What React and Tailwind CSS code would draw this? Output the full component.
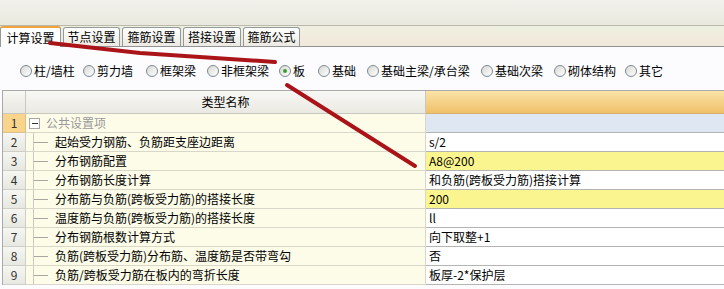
import React from 'react';

const tabs = [
  { label: '计算设置', w: 'w-[61px]', active: true },
  { label: '节点设置', w: 'w-[57px]' },
  { label: '箍筋设置', w: 'w-[59px]' },
  { label: '搭接设置', w: 'w-[58px]' },
  { label: '箍筋公式', w: 'w-[57px]' },
];

const radios = [
  { label: '柱/墙柱', w: 'w-[63px]' },
  { label: '剪力墙', w: 'w-[63px]' },
  { label: '框架梁', w: 'w-[61px]' },
  { label: '非框架梁', w: 'w-[72px]' },
  { label: '板', w: 'w-[39px]', checked: true },
  { label: '基础', w: 'w-[49px]' },
  { label: '基础主梁/承台梁', w: 'w-[114px]' },
  { label: '基础次梁', w: 'w-[73px]' },
  { label: '砌体结构', w: 'w-[71px]' },
  { label: '其它', w: 'w-[50px]' },
];

const rows = [
  { name: '起始受力钢筋、负筋距支座边距离', value: 's/2' },
  { name: '分布钢筋配置', value: 'A8@200', yellow: true },
  { name: '分布钢筋长度计算', value: '和负筋(跨板受力筋)搭接计算' },
  { name: '分布筋与负筋(跨板受力筋)的搭接长度', value: '200', yellow: true },
  { name: '温度筋与负筋(跨板受力筋)的搭接长度', value: 'll' },
  { name: '分布钢筋根数计算方式', value: '向下取整+1' },
  { name: '负筋(跨板受力筋)分布筋、温度筋是否带弯勾', value: '否' },
  { name: '负筋/跨板受力筋在板内的弯折长度', value: '板厚-2*保护层' },
];

const font = { fontFamily: '"SimSun", "Noto Sans CJK SC", "Liberation Sans", sans-serif' };

function Radio({ label, w, checked }) {
  return (
    <div className={`flex items-center shrink-0 ${w}`}>
      <span className="w-[12px] h-[12px] rounded-full border border-[#7b8a98] bg-gradient-to-br from-[#d8d8d2] to-white flex items-center justify-center shrink-0">
        {checked && <span className="w-[4px] h-[4px] rounded-full bg-[#3b9e2e]" />}
      </span>
      <span className="ml-[2px] text-[12px] leading-none text-black whitespace-nowrap">{label}</span>
    </div>
  );
}

export default function App() {
  return (
    <div className="relative w-[724px] h-[289px] overflow-hidden bg-[#fcfcfe]" style={font}>
      {/* top toolbar area */}
      <div className="h-[26px] bg-gradient-to-b from-[#f2f1eb] to-[#eae9df] border-b border-[#b9b8aa]" />

      {/* tab strip */}
      <div className="h-[21px] flex items-end gap-[2px] bg-gradient-to-b from-[#eef0e0] to-[#f2e8dc] border-b border-[#8f9396]">
        {tabs.map((t) =>
          t.active ? (
            <div
              key={t.label}
              className={`${t.w} h-[21px] -mb-px bg-white border border-b-0 border-[#919b9c] border-t-2 border-t-[#efa23d] rounded-t-[3px] flex items-center justify-center text-[12px] leading-none text-black`}
            >
              {t.label}
            </div>
          ) : (
            <div
              key={t.label}
              className={`${t.w} h-[19px] bg-gradient-to-b from-white to-[#eceae2] border border-b-0 border-[#919b9c] rounded-t-[3px] flex items-center justify-center text-[12px] leading-none text-black`}
            >
              {t.label}
            </div>
          )
        )}
      </div>

      {/* radio options */}
      <div className="h-[43px] pt-[5px] pl-[20px] flex items-center">
        {radios.map((r) => (
          <Radio key={r.label} {...r} />
        ))}
      </div>

      {/* table */}
      <div className="ml-[2px] border-l border-t border-[#a9a9a9] text-[12px] leading-none">
        <div className="grid grid-cols-[23px_400px_1fr] h-[23px]">
          <div className="bg-gradient-to-b from-[#f7f7f3] to-[#e8e7e0] border-r border-b border-[#c9c8c0]" />
          <div className="bg-gradient-to-b from-[#f8f8f5] to-[#eae9e2] border-r border-b border-[#c9c8c0] flex items-center justify-center text-black">
            类型名称
          </div>
          <div className="bg-gradient-to-b from-[#fbe3a8] to-[#efc067] border-b border-[#d6b070]" />
        </div>

        <div className="grid grid-cols-[23px_400px_1fr] h-[19px]">
          <div className="bg-[#fbd48c] border-r border-b border-[#d8c090] flex items-center justify-center text-[#333]">1</div>
          <div className="bg-[#fdfce8] border-r border-b border-[#d9d8c8] flex items-center pl-[3px]">
            <span className="w-[11px] h-[11px] border border-[#a8a8a8] bg-white flex items-center justify-center">
              <span className="w-[6px] h-px bg-[#333]" />
            </span>
            <span className="ml-[6px] text-[#9a9a9a]">公共设置项</span>
          </div>
          <div className="bg-[#dfe7f2] border-b border-[#b4b4b4]" />
        </div>

        {rows.map((r, i) => (
          <div key={i} className="grid grid-cols-[23px_400px_1fr] h-[19px]">
            <div className="bg-gradient-to-b from-[#f6f6f2] to-[#e8e8e2] border-r border-b border-[#cfcfc8] flex items-center justify-center text-[#333]">
              {i + 2}
            </div>
            <div className="bg-[#fdfce8] border-r border-b border-[#d9d8c8] flex items-center">
              <span className="ml-[7px] w-px h-full bg-[#c9c9c0]" />
              <span className="w-[14px] h-px bg-[#a8a8a0]" />
              <span className="ml-[7px] text-black whitespace-nowrap">{r.name}</span>
            </div>
            <div
              className={`${r.yellow ? 'bg-[#fbf590]' : 'bg-white'} border-b border-[#b4b4b4] flex items-center pl-[3px] text-black whitespace-nowrap`}
            >
              {r.value}
            </div>
          </div>
        ))}
      </div>

      {/* red annotation strokes */}
      <svg className="absolute inset-0 pointer-events-none" width="724" height="289">
        <path d="M50 43 L140 53 L275 62" stroke="#aa1419" strokeWidth="4" fill="none" strokeLinecap="round" />
        <path d="M287 85 L415 166" stroke="#aa1419" strokeWidth="4" fill="none" strokeLinecap="round" />
      </svg>
    </div>
  );
}
